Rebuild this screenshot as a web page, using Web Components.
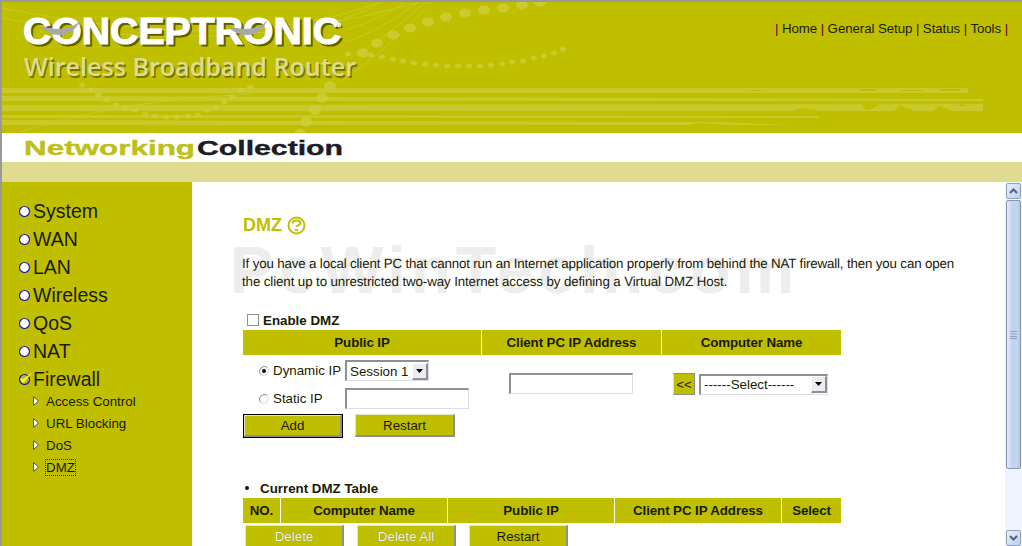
<!DOCTYPE html>
<html>
<head>
<meta charset="utf-8">
<title>DMZ</title>
<style>
    html, body{
        margin: 0;
        height: 546px;
        overflow: hidden;
        background: #fff;
        font: 13.33px "Liberation Sans", Arial, sans-serif;
        color: #1a1a00;
    }
</style>
</head>
<body>
<router-page></router-page>

<script>
const OLIVE = "#bfbf00";

class RouterHeader extends HTMLElement
{
    constructor()
    {
        super();
        this.attachShadow({mode: "open"});
    }

    getDots()
    {
        const big = [[540,2],[522,5],[503,8],[484,10],[465,13],[446,17],[428,22],[410,28],[393,35],[377,43],[363,53]];
        const small = [[348,54],[371,55],[382,57],[393,59],[403,61],[414,63],[425,64],[436,65],[447,66],[458,66],[469,66],[480,66],[491,65],[502,64],[512,62],[523,61],[534,58],[544,56],[554,53],[563,49],
            [82,85],[90,90],[98,95],[107,100],[116,105],[125,108],[135,110],[145,114],[155,116],[166,117],[177,117],[188,116],[198,115],[207,110],[216,107],[224,102],[232,97],[240,90],[250,87]];
        const large = [[330,86],[322,98],[315,110],[306,122],[300,134]];
        return big.map(d => `<ellipse cx="${d[0]}" cy="${d[1]}" rx="6" ry="4.500"/>`).join("")
            + small.map(d => `<ellipse cx="${d[0]}" cy="${d[1]}" rx="3" ry="2.500"/>`).join("")
            + large.map(d => `<ellipse cx="${d[0]}" cy="${d[1]}" rx="6" ry="5"/>`).join("");
    }

    getTemplate()
    {
        const template = document.createElement('template');
        template.innerHTML =
        `
            <div class="banner">
                <svg class="art" width="1020" height="131" viewBox="2 2 1020 131" aria-hidden="true">
                    <g fill="none" stroke="#c9c926" stroke-width="1">
                        <path d="M430 2Q400 40 340 82"/>
                        <path d="M425 2Q390 36 350 58"/>
                        <path d="M418 2Q380 32 345 42"/>
                        <path d="M405 2Q380 20 345 30"/>
                        <path d="M380 2Q365 12 345 18"/>
                        <path d="M2 18Q210 62 420 2"/>
                        <path d="M2 8Q240 56 380 2"/>
                        <path d="M20 132Q120 100 250 94"/>
                    </g>
                    <g fill="#cbcb30" opacity=".9">
                        <rect x="2" y="88" width="966" height="5"/>
                        <path d="M2 96L983 99V101L2 101Z"/>
                        <path d="M2 105L983 104V111L2 111Z"/>
                        <path d="M2 115L819 116V118L2 118Z"/>
                        <path d="M2 120L720 122L790 125H2Z"/>
                    </g>
                    <g fill="#cfcf3c" opacity=".8">${this.getDots()}</g>
                    <g fill="${OLIVE}">
                        <path d="M750 90h12v1h-12zM860 89h16v2h-16zM900 90h24v1h-24zM940 89h20v2h-20z"/>
                        <path d="M800 108l24 3h-30zM860 100l20 5-14 6zM900 105l14 6h-20zM940 106l12 5h-20zM960 104l12 2h-14z"/>
                        <path d="M700 123l30 2h-40zM770 120h20v2h-20z"/>
                    </g>
                </svg>
                <svg class="logo" width="370" height="84" viewBox="0 0 370 84">
                    <text x="25" y="45.500" textLength="318" lengthAdjust="spacingAndGlyphs" font-family="'Liberation Sans', sans-serif" font-weight="700" font-size="37" fill="#4f4f00" stroke="#4f4f00" stroke-width="1" opacity=".85">CONCEPTRONIC</text>
                    <text x="23" y="43.500" textLength="318" lengthAdjust="spacingAndGlyphs" font-family="'Liberation Sans', sans-serif" font-weight="700" font-size="37" fill="#fff" stroke="#fff" stroke-width="1">CONCEPTRONIC</text>
                    <path d="M42 27C50 38 75 41 83 14C80 27 64 31 50 28C47 27.500 44 27 42 27Z" fill="#a6a8ac"/>
                    <path d="M229 27C237 38 262 41 270 14C267 27 251 31 237 28C234 27.500 231 27 229 27Z" fill="#a6a8ac"/>
                    <circle cx="339" cy="25" r="2.400" fill="#e8e8d0"/>
                    <text x="25.500" y="77.500" textLength="332" lengthAdjust="spacingAndGlyphs" font-family="'Open Sans', sans-serif" font-weight="600" font-size="25" fill="#5f5f00" opacity=".75">Wireless Broadband Router</text>
                    <text x="24" y="76" textLength="332" lengthAdjust="spacingAndGlyphs" font-family="'Open Sans', sans-serif" font-weight="600" font-size="25" fill="#dfdc91">Wireless Broadband Router</text>
                </svg>
                <nav class="links">
                    <span>|</span> Home <span>|</span> General Setup <span>|</span> Status <span>|</span> Tools <span>|</span>
                </nav>
            </div>
            <div class="strip">
                <svg width="360" height="29" viewBox="0 0 360 29">
                    <text x="24" y="22" textLength="171" lengthAdjust="spacingAndGlyphs" font-family="'Liberation Sans', sans-serif" font-weight="700" font-size="21" fill="#bfbf1a" stroke="#bfbf1a" stroke-width=".4">Networking</text>
                    <text x="197" y="22" textLength="146" lengthAdjust="spacingAndGlyphs" font-family="'Liberation Sans', sans-serif" font-weight="700" font-size="21" fill="#1c1c28" stroke="#1c1c28" stroke-width=".4">Collection</text>
                </svg>
            </div>
            <div class="band"></div>
            ${this.getStyles()}
        `
        return template;
    }

    getStyles()
    {
        return `
        <style>
            :host{
                display: block;
            }

            .banner{
                background: ${OLIVE};
                display: flex;
                height: 131px;
                justify-content: space-between;
                overflow: hidden;
                position: relative;
            }

            .art{
                left: 0;
                position: absolute;
                top: 0;
            }

            .logo{
                display: block;
                margin: -2px 0 0 -2px;
                position: relative;
            }

            .links{
                color: #1a1a00;
                font-size: 13.330px;
                letter-spacing: -.1px;
                line-height: 16px;
                padding: 19px 14px 0 0;
                position: relative;
                white-space: nowrap;
            }

            .links span{
                color: #600000;
            }

            .strip{
                background: #fff;
                height: 29px;
            }

            .strip svg{
                display: block;
                margin-left: -2px;
            }

            .band{
                background: #dfdc91;
                height: 20px;
            }
        </style>
        `
    }

    render()
    {
        this.shadowRoot.appendChild(this.getTemplate().content.cloneNode(true));
    }

    connectedCallback()
    {
        this.render();
    }
}
customElements.define("router-header", RouterHeader);

class NavItem extends HTMLElement
{
    constructor()
    {
        super();
        this.attachShadow({mode: "open"});
    }

    getTemplate()
    {
        const template = document.createElement('template');
        const tick = this.hasAttribute("open")
            ? `<path d="M2.500 6.500L5 10L13 .5L5 6.800L3.800 5.500Z" fill="#ffff00" stroke="#ffff00" stroke-width=".8"/>`
            : "";
        template.innerHTML =
        `
            <svg width="13" height="13" viewBox="0 0 13 13">
                <circle cx="6.500" cy="6.500" r="5" fill="${this.hasAttribute("open") ? "#b4b44a" : "#fff"}" stroke="#20208a" stroke-width="1.200"/>
                ${tick}
            </svg>
            <slot></slot>
            ${this.getStyles()}
        `
        return template;
    }

    getStyles()
    {
        return `
        <style>
            :host{
                align-items: center;
                color: #1a1a00;
                display: flex;
                font-size: 19.500px;
                gap: 2px;
                height: 28px;
            }

            svg{
                overflow: visible;
            }

            :host([open]){
                margin-bottom: -3px;
            }
        </style>
        `
    }

    render()
    {
        this.shadowRoot.appendChild(this.getTemplate().content.cloneNode(true));
    }

    connectedCallback()
    {
        this.render();
    }
}
customElements.define("nav-item", NavItem);

class NavSubItem extends HTMLElement
{
    constructor()
    {
        super();
        this.attachShadow({mode: "open"});
    }

    getTemplate()
    {
        const template = document.createElement('template');
        template.innerHTML =
        `
            <svg width="6" height="10" viewBox="0 0 6 10">
                <path d="M.5 .5L5.500 5L.5 9.500Z" fill="#fff" stroke="#55553a"/>
            </svg>
            <span class="${this.hasAttribute("current") ? "current" : ""}"><slot></slot></span>
            ${this.getStyles()}
        `
        return template;
    }

    getStyles()
    {
        return `
        <style>
            :host{
                align-items: center;
                color: #1a1a00;
                display: flex;
                font-size: 13.330px;
                gap: 7px;
                height: 22px;
                padding-left: 15px;
            }

            .current{
                outline: 1px dotted #20208a;
            }
        </style>
        `
    }

    render()
    {
        this.shadowRoot.appendChild(this.getTemplate().content.cloneNode(true));
    }

    connectedCallback()
    {
        this.render();
    }
}
customElements.define("nav-sub-item", NavSubItem);

class RouterSidebar extends HTMLElement
{
    constructor()
    {
        super();
        this.attachShadow({mode: "open"});
    }

    getTemplate()
    {
        const template = document.createElement('template');
        template.innerHTML =
        `
            <slot></slot>
            ${this.getStyles()}
        `
        return template;
    }

    getStyles()
    {
        return `
        <style>
            :host{
                background: ${OLIVE};
                box-sizing: border-box;
                display: block;
                flex: none;
                padding: 15px 0 0 16px;
                width: 190px;
            }
        </style>
        `
    }

    render()
    {
        this.shadowRoot.appendChild(this.getTemplate().content.cloneNode(true));
    }

    connectedCallback()
    {
        this.render();
    }
}
customElements.define("router-sidebar", RouterSidebar);

class OliveButton extends HTMLElement
{
    constructor()
    {
        super();
        this.attachShadow({mode: "open"});
    }

    getTemplate()
    {
        const template = document.createElement('template');
        template.innerHTML =
        `
            <div class="face"><slot></slot></div>
            ${this.getStyles()}
        `
        return template;
    }

    getStyles()
    {
        return `
        <style>
            :host{
                box-sizing: border-box;
                display: block;
                flex: none;
                height: 23px;
                width: var(--w, 100px);
            }

            :host([default]){
                border: 1px solid #000;
                height: 24px;
            }

            .face{
                align-items: center;
                background: ${OLIVE};
                border-bottom: 2px solid #8e8e8e;
                border-left: 1px solid #e4e4c0;
                border-right: 2px solid #8e8e8e;
                border-top: 1px solid #e4e4c0;
                box-sizing: border-box;
                color: #1a1a00;
                display: flex;
                font-size: 13.330px;
                height: 100%;
                justify-content: center;
            }

            :host([disabled]) .face{
                color: #f4f4e0;
                text-shadow: 0 0 1px #77775a;
            }
        </style>
        `
    }

    render()
    {
        this.shadowRoot.appendChild(this.getTemplate().content.cloneNode(true));
    }

    connectedCallback()
    {
        this.render();
    }
}
customElements.define("olive-button", OliveButton);

class DropSelect extends HTMLElement
{
    constructor()
    {
        super();
        this.attachShadow({mode: "open"});
    }

    getTemplate()
    {
        const template = document.createElement('template');
        template.innerHTML =
        `
            <span class="value"><slot></slot></span>
            <span class="arrow">
                <svg width="7" height="4" viewBox="0 0 7 4"><path d="M0 0H7L3.500 4Z" fill="#000"/></svg>
            </span>
            ${this.getStyles()}
        `
        return template;
    }

    getStyles()
    {
        return `
        <style>
            :host{
                align-items: center;
                background: #fff;
                border-bottom: 1px solid #dcdce2;
                border-left: 2px solid #8f8f96;
                border-right: 1px solid #dcdce2;
                border-top: 2px solid #8f8f96;
                box-sizing: border-box;
                display: flex;
                flex: none;
                font-size: 13.330px;
                height: 21px;
                justify-content: space-between;
            }

            .value{
                padding-left: 3px;
                white-space: nowrap;
            }

            .arrow{
                align-items: center;
                background: #ecebf0;
                border-bottom: 2px solid #8f8f96;
                border-right: 2px solid #8f8f96;
                border-left: 1px solid #fff;
                border-top: 1px solid #fff;
                box-sizing: border-box;
                display: flex;
                height: 17px;
                justify-content: center;
                width: 16px;
            }
        </style>
        `
    }

    render()
    {
        this.shadowRoot.appendChild(this.getTemplate().content.cloneNode(true));
    }

    connectedCallback()
    {
        this.render();
    }
}
customElements.define("drop-select", DropSelect);

class TextBox extends HTMLElement
{
    constructor()
    {
        super();
        this.attachShadow({mode: "open"});
    }

    getTemplate()
    {
        const template = document.createElement('template');
        template.innerHTML =
        `
            <input type="text">
            ${this.getStyles()}
        `
        return template;
    }

    getStyles()
    {
        return `
        <style>
            :host{
                display: block;
                flex: none;
                height: 21px;
                width: 124px;
            }

            input{
                background: #fff;
                border-bottom: 1px solid #dcdce2;
                border-left: 2px solid #8f8f96;
                border-right: 1px solid #dcdce2;
                border-top: 2px solid #8f8f96;
                box-sizing: border-box;
                display: block;
                height: 100%;
                margin: 0;
                padding: 0;
                width: 100%;
            }
        </style>
        `
    }

    render()
    {
        this.shadowRoot.appendChild(this.getTemplate().content.cloneNode(true));
    }

    connectedCallback()
    {
        this.render();
    }
}
customElements.define("text-box", TextBox);

class RadioMark extends HTMLElement
{
    constructor()
    {
        super();
        this.attachShadow({mode: "open"});
    }

    getTemplate()
    {
        const template = document.createElement('template');
        const dot = this.hasAttribute("checked") ? `<circle cx="6" cy="6" r="2" fill="#111"/>` : "";
        template.innerHTML =
        `
            <svg width="12" height="12" viewBox="0 0 12 12">
                <path d="M2.500 9.500A5 5 0 0 1 9.500 2.500" fill="none" stroke="#8f8f8f"/>
                <path d="M2.500 9.500A5 5 0 0 0 9.500 2.500" fill="none" stroke="#dcdcdc"/>
                ${dot}
            </svg>
            ${this.getStyles()}
        `
        return template;
    }

    getStyles()
    {
        return `
        <style>
            :host{
                display: block;
                flex: none;
                height: 12px;
                width: 12px;
            }

            svg{
                display: block;
            }
        </style>
        `
    }

    render()
    {
        this.shadowRoot.appendChild(this.getTemplate().content.cloneNode(true));
    }

    connectedCallback()
    {
        this.render();
    }
}
customElements.define("radio-mark", RadioMark);

class HeadRow extends HTMLElement
{
    constructor()
    {
        super();
        this.attachShadow({mode: "open"});
    }

    getTemplate()
    {
        const template = document.createElement('template');
        template.innerHTML =
        `
            <slot></slot>
            ${this.getStyles()}
        `
        return template;
    }

    getStyles()
    {
        return `
        <style>
            :host{
                column-gap: 1px;
                display: grid;
                grid-template-columns: var(--cols);
                width: 598px;
            }

            ::slotted(div){
                align-items: center;
                background: ${OLIVE};
                color: #1a1a00;
                display: flex;
                font-size: 13.330px;
                font-weight: bold;
                height: 25px;
                justify-content: center;
                letter-spacing: -.1px;
            }
        </style>
        `
    }

    render()
    {
        this.shadowRoot.appendChild(this.getTemplate().content.cloneNode(true));
    }

    connectedCallback()
    {
        this.render();
    }
}
customElements.define("head-row", HeadRow);

class FakeScrollbar extends HTMLElement
{
    constructor()
    {
        super();
        this.attachShadow({mode: "open"});
    }

    getTemplate()
    {
        const template = document.createElement('template');
        template.innerHTML =
        `
            <div class="end">
                <svg width="9" height="6" viewBox="0 0 9 6"><path d="M1 5L4.500 1.500L8 5" fill="none" stroke="#4d6185" stroke-width="2"/></svg>
            </div>
            <div class="thumb">
                <svg width="7" height="8" viewBox="0 0 7 8"><path d="M0 .5H7M0 3H7M0 5.500H7M0 7.500H7" stroke="#8ea2c2" stroke-width="1"/></svg>
            </div>
            <div class="track"></div>
            <div class="end">
                <svg width="9" height="6" viewBox="0 0 9 6"><path d="M1 1L4.500 4.500L8 1" fill="none" stroke="#4d6185" stroke-width="2"/></svg>
            </div>
            ${this.getStyles()}
        `
        return template;
    }

    getStyles()
    {
        return `
        <style>
            :host{
                background: #f0f5fd;
                box-sizing: border-box;
                display: flex;
                flex: none;
                flex-direction: column;
                height: 364px;
                padding: 1px 1px 0;
                width: 17px;
            }

            .end{
                align-items: center;
                background: linear-gradient(135deg, #e6eefb, #bfd0ea);
                border: 1px solid #8fa3bf;
                border-radius: 2px;
                box-sizing: border-box;
                display: flex;
                flex: none;
                height: 16px;
                justify-content: center;
            }

            .thumb{
                align-items: center;
                background: linear-gradient(90deg, #e2ebfa, #bfd1ec 45%, #c6d6ee 75%, #b3c6e3);
                border: 1px solid #8197b4;
                border-radius: 2px;
                box-sizing: border-box;
                display: flex;
                flex: none;
                height: 269px;
                justify-content: center;
                margin-top: 1px;
            }

            .track{
                flex: 1;
            }
        </style>
        `
    }

    render()
    {
        this.shadowRoot.appendChild(this.getTemplate().content.cloneNode(true));
    }

    connectedCallback()
    {
        this.render();
    }
}
customElements.define("fake-scrollbar", FakeScrollbar);

class DmzPanel extends HTMLElement
{
    constructor()
    {
        super();
        this.attachShadow({mode: "open"});
    }

    getTemplate()
    {
        const template = document.createElement('template');
        template.innerHTML =
        `
            <div class="watermark">PcWinTech.com</div>
            <div class="body">
                <h1>DMZ
                    <svg width="19" height="19" viewBox="0 0 19 19">
                        <circle cx="9.500" cy="9.500" r="8" fill="none" stroke="${OLIVE}" stroke-width="2"/>
                        <path d="M5.500 7.500C6 3.500 13 3.500 13.500 7C13.800 9.500 9.500 9 9.500 11" fill="none" stroke="${OLIVE}" stroke-width="2"/>
                        <rect x="8" y="13" width="3" height="2" fill="${OLIVE}"/>
                    </svg>
                </h1>
                <p><span class="line-a">If you have a local client PC that cannot run an Internet application properly from behind the NAT firewall, then you can open</span> <span class="line-b">the client up to unrestricted two-way Internet access by defining a Virtual DMZ Host.</span></p>

                <label class="enable"><span class="check"></span>Enable DMZ</label>

                <head-row style="--cols: 238px 179px 179px">
                    <div>Public IP</div>
                    <div>Client PC IP Address</div>
                    <div>Computer Name</div>
                </head-row>

                <div class="form">
                    <div class="ipcell">
                        <div class="iprow">
                            <radio-mark checked></radio-mark>
                            <span class="iplabel">Dynamic IP</span>
                            <drop-select style="width: 84px">Session 1</drop-select>
                        </div>
                        <div class="iprow second">
                            <radio-mark></radio-mark>
                            <span class="iplabel">Static IP</span>
                            <text-box></text-box>
                        </div>
                        <div class="actions">
                            <olive-button default>Add</olive-button>
                            <olive-button>Restart</olive-button>
                        </div>
                    </div>
                    <div class="clientcell">
                        <text-box></text-box>
                    </div>
                    <div class="namecell">
                        <span class="pick">&lt;&lt;</span>
                        <drop-select style="width: 129px">------Select------</drop-select>
                    </div>
                </div>

                <div class="current"><span class="dot"></span>Current DMZ Table</div>

                <head-row style="--cols: 37px 166px 166px 166px 59px">
                    <div>NO.</div>
                    <div>Computer Name</div>
                    <div>Public IP</div>
                    <div>Client PC IP Address</div>
                    <div>Select</div>
                </head-row>

                <div class="tableactions">
                    <olive-button disabled style="--w: 99px">Delete</olive-button>
                    <olive-button disabled style="--w: 99px">Delete All</olive-button>
                    <olive-button style="--w: 99px">Restart</olive-button>
                </div>
            </div>
            ${this.getStyles()}
        `
        return template;
    }

    getStyles()
    {
        return `
        <style>
            :host{
                background: #fff;
                color: #1a1a00;
                display: block;
                flex: 1;
                font-size: 13.330px;
                height: 364px;
                overflow: hidden;
                position: relative;
            }

            .watermark{
                color: #ededed;
                font: bold 66px/64px "Liberation Sans", sans-serif;
                left: 38px;
                letter-spacing: 5px;
                position: absolute;
                top: 56px;
                white-space: nowrap;
            }

            .body{
                padding: 32px 0 0 51px;
                position: relative;
            }

            h1{
                align-items: center;
                color: ${OLIVE};
                display: flex;
                font-size: 18px;
                font-weight: bold;
                gap: 5px;
                height: 22px;
                margin: 0;
            }

            p{
                font-size: 13.330px;
                line-height: 18px;
                margin: 19px 0 0 -1px;
                text-rendering: geometricPrecision;
                width: 730px;
            }

            .line-a, .line-b{
                display: block;
                white-space: nowrap;
            }

            .line-a{
                letter-spacing: -.155px;
            }

            .line-b{
                letter-spacing: -.11px;
            }

            .enable{
                align-items: center;
                display: flex;
                font-weight: bold;
                height: 16px;
                margin: 21px 0 2px 4px;
            }

            .check{
                background: #fdfdfd;
                border: 1px solid #8f8f8f;
                box-sizing: border-box;
                height: 12px;
                margin-right: 4px;
                width: 12px;
            }

            .form{
                display: grid;
                grid-template-columns: 239px 180px 179px;
                height: 83px;
                width: 598px;
            }

            .iprow{
                align-items: center;
                display: flex;
                height: 21px;
                margin-top: 5px;
                padding-left: 15px;
            }

            .iprow.second{
                margin-top: 7px;
            }

            .iplabel{
                margin-left: 3px;
                white-space: nowrap;
                width: 72px;
            }

            .actions{
                display: flex;
                gap: 12px;
                margin-top: 5px;
            }

            .clientcell{
                padding: 18px 0 0 27px;
            }

            .namecell{
                align-items: center;
                display: flex;
                gap: 4px;
                height: 22px;
                margin-top: 18px;
                padding-left: 11px;
            }

            .pick{
                align-items: center;
                background: ${OLIVE};
                border-bottom: 1px solid #8e8e8e;
                border-left: 1px solid #e4e4c0;
                border-right: 1px solid #8e8e8e;
                border-top: 1px solid #8e8e8e;
                box-sizing: border-box;
                display: flex;
                font-size: 13.330px;
                height: 22px;
                justify-content: center;
                width: 22px;
            }

            .current{
                align-items: center;
                display: flex;
                font-weight: bold;
                height: 16px;
                margin: 42px 0 2px;
                padding-left: 2px;
            }

            .dot{
                background: #111;
                border-radius: 50%;
                height: 4px;
                margin-right: 11px;
                width: 4px;
            }

            .tableactions{
                display: flex;
                gap: 13px;
                margin-top: 2px;
                padding-left: 2px;
            }
        </style>
        `
    }

    render()
    {
        this.shadowRoot.appendChild(this.getTemplate().content.cloneNode(true));
    }

    connectedCallback()
    {
        this.render();
    }
}
customElements.define("dmz-panel", DmzPanel);

class RouterPage extends HTMLElement
{
    constructor()
    {
        super();
        this.attachShadow({mode: "open"});
    }

    getTemplate()
    {
        const template = document.createElement('template');
        template.innerHTML =
        `
            <router-header></router-header>
            <div class="main">
                <router-sidebar>
                    <nav-item>System</nav-item>
                    <nav-item>WAN</nav-item>
                    <nav-item>LAN</nav-item>
                    <nav-item>Wireless</nav-item>
                    <nav-item>QoS</nav-item>
                    <nav-item>NAT</nav-item>
                    <nav-item open>Firewall</nav-item>
                    <nav-sub-item>Access Control</nav-sub-item>
                    <nav-sub-item>URL Blocking</nav-sub-item>
                    <nav-sub-item>DoS</nav-sub-item>
                    <nav-sub-item current>DMZ</nav-sub-item>
                </router-sidebar>
                <dmz-panel></dmz-panel>
                <fake-scrollbar></fake-scrollbar>
            </div>
            ${this.getStyles()}
        `
        return template;
    }

    getStyles()
    {
        return `
        <style>
            :host{
                border-left: 2px solid #999;
                border-top: 2px solid #999;
                box-sizing: border-box;
                display: block;
                height: 546px;
                overflow: hidden;
                width: 1022px;
            }

            .main{
                display: flex;
            }
        </style>
        `
    }

    render()
    {
        this.shadowRoot.appendChild(this.getTemplate().content.cloneNode(true));
    }

    connectedCallback()
    {
        this.render();
    }
}
customElements.define("router-page", RouterPage);
</script>
</body>
</html>
